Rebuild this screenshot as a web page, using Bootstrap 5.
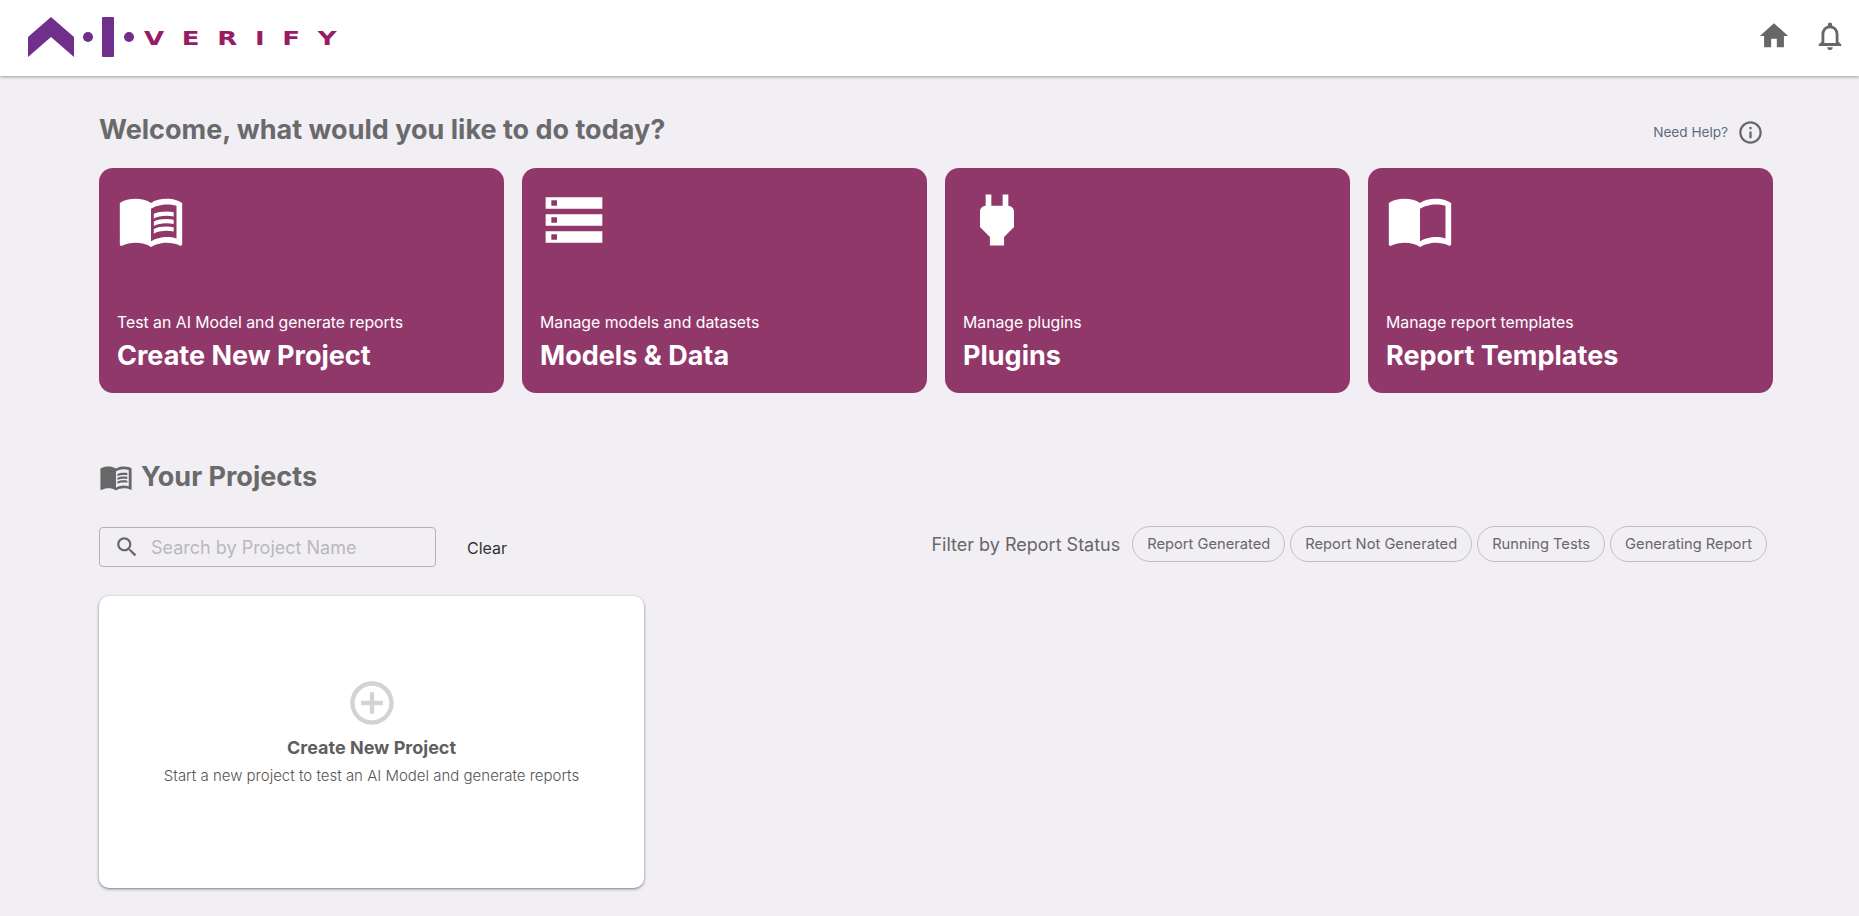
<!DOCTYPE html>
<html lang="en">
<head>
  <meta charset="UTF-8" />
  <meta name="viewport" content="width=device-width, initial-scale=1" />
  <title>AI Verify</title>
  <link href="https://cdn.jsdelivr.net/npm/bootstrap@5.3.3/dist/css/bootstrap.min.css" rel="stylesheet" />
  <style>
    body {
      background: #f1eff4;
      font-family: Inter, "Liberation Sans", sans-serif;
      color: #676767;
      min-height: 916px;
    }

    .top-bar {
      height: 76px;
      background: #fff;
      padding: 0 12px 4px 28px;
      box-shadow: 0 1px 3px rgba(0, 0, 0, 0.35);
    }

    .brand-mark { margin-top: 4px; }

    .logo-word {
      font-family: "DejaVu Sans", sans-serif;
      font-weight: 700;
      font-size: 20px;
      line-height: 1;
      letter-spacing: 13.6px;
      color: #9a1b64;
      margin-left: -2px;
      margin-top: 4px;
      transform: scaleX(1.3);
      transform-origin: left center;
    }

    .top-icon { fill: #676767; }

    .top-actions { gap: 22px; }

    .page-body { padding: 0 86px 0 99px; }

    .welcome-row { height: 92px; padding-top: 17px; }

    .welcome-title {
      font-size: 27px;
      font-weight: 700;
      color: #6a6a6a;
      margin: 0;
    }

    .help-text { font-size: 13.6px; color: #5f6b7a; margin-right: 9px; }

    .help-wrap { margin-right: 9px; margin-top: 3px; }

    .tile-grid {
      display: grid;
      grid-template-columns: repeat(4, 405px);
      gap: 18px;
    }

    .tile {
      height: 225px;
      padding: 18px;
      background: #91386b;
      color: #fff;
      border-radius: 14px;
    }

    .tile svg { fill: #fff; display: block; }

    .tile-sub { font-size: 15.8px; line-height: 24px; margin-bottom: 3px; }

    .tile-title { font-size: 27px; font-weight: 700; line-height: 36px; margin-bottom: 1px; }

    .projects-head { margin-top: 65px; height: 38px; }

    .projects-title {
      font-size: 27px;
      font-weight: 700;
      color: #6a6a6a;
      margin: 0 0 0 8px;
    }

    .tools-row { margin-top: 30px; height: 42px; }

    .search-box {
      width: 337px;
      height: 40px;
      border: 1px solid #b3b1b8;
      border-radius: 4px;
      padding: 0 14px;
    }

    .search-box input {
      border: 0;
      background: transparent;
      outline: 0;
      width: 100%;
      margin-left: 9px;
      padding-top: 2px;
      font-size: 18px;
      color: #333;
    }

    .search-box input::placeholder { color: #b9b8bc; opacity: 1; }

    .clear-link { margin-left: 31px; margin-top: 1px; color: #333; font-size: 16px; text-decoration: none; }

    .filter-wrap { margin-right: 6px; align-self: flex-start; gap: 5px; }

    .filter-label { font-size: 18px; color: #676767; margin-right: 7px; }

    .filter-pill {
      height: 36px;
      padding: 0 14px;
      border: 1px solid #c0bfc4;
      border-radius: 18px;
      font-size: 14.7px;
      color: #676767;
      background: transparent;
    }

    .new-card {
      width: 545px;
      height: 292px;
      margin-top: 28px;
      background: #fff;
      border: 0;
      border-radius: 10px;
      box-shadow: 0 1px 3px rgba(0, 0, 0, 0.5);
      padding-top: 81px;
    }

    .new-title { font-size: 18px; font-weight: 700; color: #5f5f5f; margin-top: 5px; line-height: 28px; }

    .new-sub { font-size: 15px; font-weight: 300; color: #555; line-height: 28px; }
  </style>
</head>

<body>
  <header class="top-bar d-flex align-items-center justify-content-between">
    <div class="d-flex align-items-center">
      <svg class="brand-mark" width="118" height="42" viewBox="0 0 118 42">
        <path fill="#702f8a" d="M0 20 23 0 46 20V40L23 20 0 40Z"/>
        <circle fill="#702f8a" cx="60" cy="20" r="5"/>
        <rect fill="#702f8a" x="74" y="0" width="12" height="40" rx="1"/>
        <circle fill="#702f8a" cx="101" cy="20" r="5"/>
      </svg>
      <span class="logo-word d-inline-block">VERIFY</span>
    </div>
    <div class="top-actions d-flex align-items-center">
      <svg class="top-icon" width="34" height="34" viewBox="0 0 24 24"><path d="M10 20v-6h4v6h5v-8h3L12 3 2 12h3v8z"/></svg>
      <svg class="top-icon" width="34" height="34" viewBox="0 0 24 24"><path d="M12 22c1.1 0 2-.9 2-2h-4c0 1.1.9 2 2 2zm6-6v-5c0-3.07-1.63-5.64-4.5-6.32V4c0-.83-.67-1.5-1.5-1.5s-1.5.67-1.5 1.5v.68C7.64 5.36 6 7.92 6 11v5l-2 2v1h16v-1l-2-2zm-2 1H8v-6c0-2.48 1.51-4.5 4-4.5s4 2.02 4 4.5v6z"/></svg>
    </div>
  </header>

  <main class="page-body">
    <div class="welcome-row d-flex align-items-center justify-content-between">
      <h1 class="welcome-title">Welcome, what would you like to do today?</h1>
      <div class="help-wrap d-flex align-items-center">
        <span class="help-text">Need Help?</span>
        <svg class="top-icon" width="27" height="27" viewBox="0 0 24 24"><path d="M11 7h2v2h-2zm0 4h2v6h-2zm1-9C6.48 2 2 6.48 2 12s4.48 10 10 10 10-4.48 10-10S17.52 2 12 2zm0 18c-4.41 0-8-3.59-8-8s3.59-8 8-8 8 3.59 8 8-3.59 8-8 8z"/></svg>
      </div>
    </div>

    <div class="tile-grid">
      <div class="tile d-flex flex-column justify-content-between">
        <svg width="68" height="68" viewBox="0 0 24 24"><path d="M21 5c-1.11-.35-2.33-.5-3.5-.5-1.95 0-4.05.4-5.5 1.5-1.45-1.1-3.55-1.5-5.5-1.5S2.45 4.9 1 6v14.65c0 .25.25.5.5.5.1 0 .15-.05.25-.05C3.1 20.45 5.05 20 6.5 20c1.95 0 4.05.4 5.5 1.5 1.35-.85 3.8-1.5 5.5-1.5 1.65 0 3.35.3 4.75 1.05.1.05.15.05.25.05.25 0 .5-.25.5-.5V6c-.6-.45-1.25-.75-2-1zm0 13.5c-1.1-.35-2.3-.5-3.5-.5-1.7 0-4.15.65-5.5 1.5V8c1.35-.85 3.8-1.5 5.5-1.5 1.2 0 2.4.15 3.5.5v11.5z"/><path d="M17.5 10.5c.88 0 1.73.09 2.5.26V9.24c-.79-.15-1.64-.24-2.5-.24-1.7 0-3.24.29-4.5.83v1.66c1.13-.64 2.7-.99 4.5-.99zM13 12.49v1.66c1.13-.64 2.7-.99 4.5-.99.88 0 1.73.09 2.5.26V11.9c-.79-.15-1.64-.24-2.5-.24-1.7 0-3.24.3-4.5.83zM17.5 14.33c-1.7 0-3.24.29-4.5.83v1.66c1.13-.64 2.7-.99 4.5-.99.88 0 1.73.09 2.5.26v-1.52c-.79-.16-1.64-.24-2.5-.24z"/></svg>
        <div>
          <div class="tile-sub">Test an AI Model and generate reports</div>
          <div class="tile-title">Create New Project</div>
        </div>
      </div>
      <div class="tile d-flex flex-column justify-content-between">
        <svg width="68" height="68" viewBox="0 0 24 24"><path d="M2 20h20v-4H2v4zm2-3h2v2H4v-2zM2 4v4h20V4H2zm4 3H4V5h2v2zm-4 7h20v-4H2v4zm2-3h2v2H4v-2z"/></svg>
        <div>
          <div class="tile-sub">Manage models and datasets</div>
          <div class="tile-title">Models &amp; Data</div>
        </div>
      </div>
      <div class="tile d-flex flex-column justify-content-between">
        <svg width="68" height="68" viewBox="0 0 24 24"><path d="M16.01 7L16 3h-2v4h-4V3H8v4h-.01C7 6.99 6 7.99 6 8.99v5.49L9.5 18v3h5v-3l3.5-3.51v-5.5c0-1-1-2-1.99-1.99z"/></svg>
        <div>
          <div class="tile-sub">Manage plugins</div>
          <div class="tile-title">Plugins</div>
        </div>
      </div>
      <div class="tile d-flex flex-column justify-content-between">
        <svg width="68" height="68" viewBox="0 0 24 24"><path d="M21 5c-1.11-.35-2.33-.5-3.5-.5-1.95 0-4.05.4-5.5 1.5-1.45-1.1-3.55-1.5-5.5-1.5S2.45 4.9 1 6v14.65c0 .25.25.5.5.5.1 0 .15-.05.25-.05C3.1 20.45 5.05 20 6.5 20c1.95 0 4.05.4 5.5 1.5 1.35-.85 3.8-1.5 5.5-1.5 1.65 0 3.35.3 4.75 1.05.1.05.15.05.25.05.25 0 .5-.25.5-.5V6c-.6-.45-1.25-.75-2-1zm0 13.5c-1.1-.35-2.3-.5-3.5-.5-1.7 0-4.15.65-5.5 1.5V8c1.35-.85 3.8-1.5 5.5-1.5 1.2 0 2.4.15 3.5.5v11.5z"/></svg>
        <div>
          <div class="tile-sub">Manage report templates</div>
          <div class="tile-title">Report Templates</div>
        </div>
      </div>
    </div>

    <div class="projects-head d-flex align-items-center">
      <svg class="top-icon" width="34" height="34" viewBox="0 0 24 24"><path d="M21 5c-1.11-.35-2.33-.5-3.5-.5-1.95 0-4.05.4-5.5 1.5-1.45-1.1-3.55-1.5-5.5-1.5S2.45 4.9 1 6v14.65c0 .25.25.5.5.5.1 0 .15-.05.25-.05C3.1 20.45 5.05 20 6.5 20c1.95 0 4.05.4 5.5 1.5 1.35-.85 3.8-1.5 5.5-1.5 1.65 0 3.35.3 4.75 1.05.1.05.15.05.25.05.25 0 .5-.25.5-.5V6c-.6-.45-1.25-.75-2-1zm0 13.5c-1.1-.35-2.3-.5-3.5-.5-1.7 0-4.15.65-5.5 1.5V8c1.35-.85 3.8-1.5 5.5-1.5 1.2 0 2.4.15 3.5.5v11.5z"/><path d="M17.5 10.5c.88 0 1.73.09 2.5.26V9.24c-.79-.15-1.64-.24-2.5-.24-1.7 0-3.24.29-4.5.83v1.66c1.13-.64 2.7-.99 4.5-.99zM13 12.49v1.66c1.13-.64 2.7-.99 4.5-.99.88 0 1.73.09 2.5.26V11.9c-.79-.15-1.64-.24-2.5-.24-1.7 0-3.24.3-4.5.83zM17.5 14.33c-1.7 0-3.24.29-4.5.83v1.66c1.13-.64 2.7-.99 4.5-.99.88 0 1.73.09 2.5.26v-1.52c-.79-.16-1.64-.24-2.5-.24z"/></svg>
      <h2 class="projects-title">Your Projects</h2>
    </div>

    <div class="tools-row d-flex align-items-center justify-content-between">
      <div class="d-flex align-items-center">
        <div class="search-box d-flex align-items-center">
          <svg class="top-icon flex-shrink-0" width="26" height="26" viewBox="0 0 24 24"><path d="M15.5 14h-.79l-.28-.27C15.41 12.59 16 11.11 16 9.5 16 5.91 13.09 3 9.5 3S3 5.91 3 9.5 5.91 16 9.5 16c1.61 0 3.09-.59 4.23-1.57l.27.28v.79l5 4.99L20.49 19l-4.99-5zm-6 0C7.01 14 5 11.99 5 9.5S7.01 5 9.5 5 14 7.01 14 9.5 11.99 14 9.5 14z"/></svg>
          <input type="text" placeholder="Search by Project Name" />
        </div>
        <a class="clear-link" href="#">Clear</a>
      </div>
      <div class="filter-wrap d-flex align-items-center">
        <span class="filter-label">Filter by Report Status</span>
        <button class="filter-pill" type="button">Report Generated</button>
        <button class="filter-pill" type="button">Report Not Generated</button>
        <button class="filter-pill" type="button">Running Tests</button>
        <button class="filter-pill" type="button">Generating Report</button>
      </div>
    </div>

    <div class="card new-card align-items-center text-center">
      <svg width="52" height="52" viewBox="0 0 24 24" fill="#d3d3d3"><path d="M13 7h-2v4H7v2h4v4h2v-4h4v-2h-4V7zm-1-5C6.48 2 2 6.48 2 12s4.48 10 10 10 10-4.48 10-10S17.52 2 12 2zm0 18c-4.41 0-8-3.59-8-8s3.59-8 8-8 8 3.59 8 8-3.59 8-8 8z"/></svg>
      <div class="new-title">Create New Project</div>
      <div class="new-sub">Start a new project to test an AI Model and generate reports</div>
    </div>
  </main>
</body>
</html>
